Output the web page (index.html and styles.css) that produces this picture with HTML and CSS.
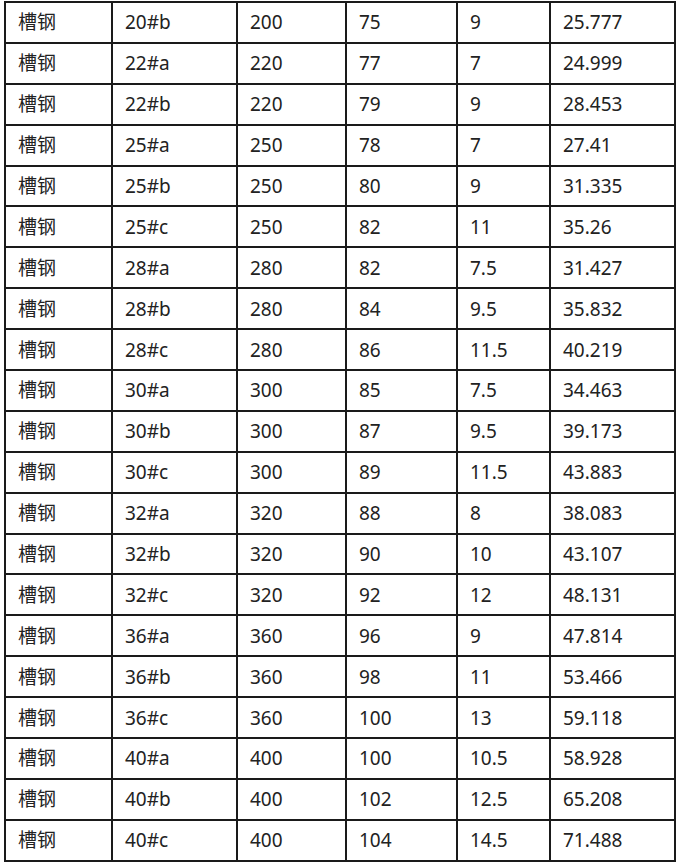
FILE: index.html
```html
<!DOCTYPE html>
<html>
<head>
<meta charset="utf-8">
<link rel="stylesheet" href="styles.css">
</head>
<body>
<table class="spec">
<colgroup><col class="c1"><col class="c2"><col class="c3"><col class="c4"><col class="c5"><col class="c6"></colgroup>
<tbody>
<tr><td>槽钢</td><td>20#b</td><td>200</td><td>75</td><td>9</td><td>25.777</td></tr>
<tr><td>槽钢</td><td>22#a</td><td>220</td><td>77</td><td>7</td><td>24.999</td></tr>
<tr><td>槽钢</td><td>22#b</td><td>220</td><td>79</td><td>9</td><td>28.453</td></tr>
<tr><td>槽钢</td><td>25#a</td><td>250</td><td>78</td><td>7</td><td>27.41</td></tr>
<tr><td>槽钢</td><td>25#b</td><td>250</td><td>80</td><td>9</td><td>31.335</td></tr>
<tr><td>槽钢</td><td>25#c</td><td>250</td><td>82</td><td>11</td><td>35.26</td></tr>
<tr><td>槽钢</td><td>28#a</td><td>280</td><td>82</td><td>7.5</td><td>31.427</td></tr>
<tr><td>槽钢</td><td>28#b</td><td>280</td><td>84</td><td>9.5</td><td>35.832</td></tr>
<tr><td>槽钢</td><td>28#c</td><td>280</td><td>86</td><td>11.5</td><td>40.219</td></tr>
<tr><td>槽钢</td><td>30#a</td><td>300</td><td>85</td><td>7.5</td><td>34.463</td></tr>
<tr><td>槽钢</td><td>30#b</td><td>300</td><td>87</td><td>9.5</td><td>39.173</td></tr>
<tr><td>槽钢</td><td>30#c</td><td>300</td><td>89</td><td>11.5</td><td>43.883</td></tr>
<tr><td>槽钢</td><td>32#a</td><td>320</td><td>88</td><td>8</td><td>38.083</td></tr>
<tr><td>槽钢</td><td>32#b</td><td>320</td><td>90</td><td>10</td><td>43.107</td></tr>
<tr><td>槽钢</td><td>32#c</td><td>320</td><td>92</td><td>12</td><td>48.131</td></tr>
<tr><td>槽钢</td><td>36#a</td><td>360</td><td>96</td><td>9</td><td>47.814</td></tr>
<tr><td>槽钢</td><td>36#b</td><td>360</td><td>98</td><td>11</td><td>53.466</td></tr>
<tr><td>槽钢</td><td>36#c</td><td>360</td><td>100</td><td>13</td><td>59.118</td></tr>
<tr><td>槽钢</td><td>40#a</td><td>400</td><td>100</td><td>10.5</td><td>58.928</td></tr>
<tr><td>槽钢</td><td>40#b</td><td>400</td><td>102</td><td>12.5</td><td>65.208</td></tr>
<tr><td>槽钢</td><td>40#c</td><td>400</td><td>104</td><td>14.5</td><td>71.488</td></tr>
</tbody>
</table>
</body>
</html>
```
FILE: styles.css
```css
html, body {
  margin: 0;
  padding: 0;
  background: #ffffff;
}
body {
  padding: 1px 0 0 4px;
}
.spec {
  border-collapse: collapse;
  table-layout: fixed;
  width: 672px;
  font-family: "Noto Sans", "Noto Sans CJK SC", sans-serif;
  font-size: 19px;
  color: #222222;
}
.c1 { width: 107px; }
.c2 { width: 125px; }
.c3 { width: 109px; }
.c4 { width: 111px; }
.c5 { width: 93px; }
.c6 { width: 125px; }
.spec td {
  border: 2px solid #1a1a1a;
  height: 40.9px;
  padding: 0 0 0 12px;
  box-sizing: border-box;
  line-height: 20px;
  vertical-align: middle;
  white-space: nowrap;
}
```
